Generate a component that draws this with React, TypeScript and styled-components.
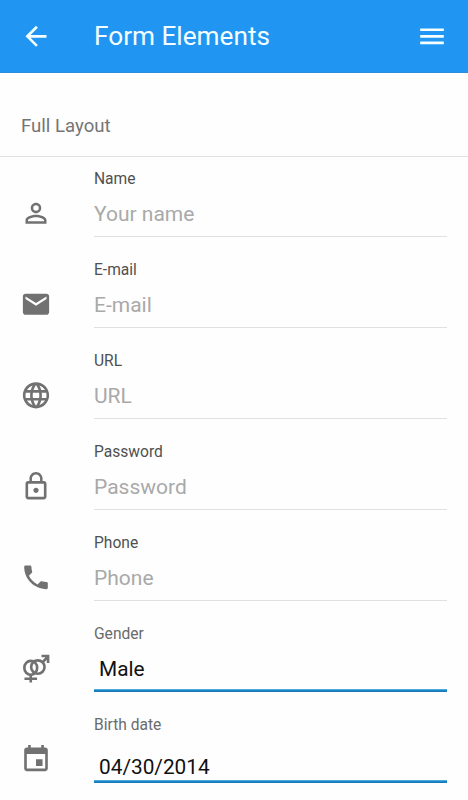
import React from 'react';
import styled, { createGlobalStyle } from 'styled-components';

const GlobalStyle = createGlobalStyle`
  * { box-sizing: border-box; }
  body {
    margin: 0;
    background: #fefefe;
    font-family: Roboto, "Liberation Sans", sans-serif;
    overflow: hidden;
  }
`;

const Screen = styled.div`
  width: 100%;
  height: 800px;
  overflow: hidden;
  background: #fefefe;
`;

const Toolbar = styled.header`
  display: flex;
  align-items: center;
  height: 73px;
  padding: 0 20px;
  background: #2096f2;
  border-bottom: 1px solid #2b8fdd;
  color: #f4feff;
`;

const Title = styled.h1`
  flex: 1;
  margin: 0 0 0 42px;
  font-size: 26.2px;
  line-height: 32px;
  font-weight: 400;
`;

const IconButton = styled.button`
  display: flex;
  padding: 0;
  border: 0;
  background: none;
  color: inherit;
`;

const Svg = styled.svg`
  display: block;
  width: 32px;
  height: 32px;
  fill: currentColor;
`;

const SectionTitle = styled.h2`
  height: 84px;
  margin: 0;
  padding: 41px 21px 0;
  border-bottom: 1px solid #e2e2e2;
  color: #757575;
  font-size: 18.6px;
  line-height: 24px;
  font-weight: 400;
`;

const Row = styled.label`
  display: grid;
  grid-template-columns: 73px 1fr;
  height: 91px;
  padding: 0 21px 0 20px;
`;

const RowIcon = styled.span`
  padding-top: 40px;
  color: #717171;
`;

const Field = styled.span`
  display: flex;
  flex-direction: column;
  padding: 11px 0 0 1px;
`;

const Caption = styled.span<{ $muted?: boolean }>`
  height: 20px;
  color: ${(p) => (p.$muted ? '#6b6b6b' : '#505050')};
  font-size: 15.6px;
  line-height: 22px;
`;

const Input = styled.input`
  width: 100%;
  height: 49px;
  padding: 3px 0 0;
  border: 0;
  border-radius: 0;
  border-bottom: 1px solid #e0e0e0;
  outline: 0;
  background: transparent;
  color: #111;
  font: 400 21px Roboto, "Liberation Sans", sans-serif;
  &::placeholder { color: #a9a9a9; opacity: 1; }
`;

const PickerInput = styled(Input)<{ $drop: number }>`
  padding: ${(p) => p.$drop}px 0 3px 5px;
  border-bottom: 0;
  background: linear-gradient(#4da8dc 0 1px, #1d86c8 1px 2px, #1a78b5 2px) bottom / 100% 3px no-repeat;
  font-size: 20.8px;
`;

function Icon({ d, children }: { d?: string; children?: React.ReactNode }) {
  return <Svg viewBox="-0.19 -0.45 24.38 24.38" aria-hidden="true">{d ? <path d={d} /> : children}</Svg>;
}

const paths = {
  back: 'M20 11H7.83l5.59-5.59L12 4l-8 8 8 8 1.41-1.41L7.83 13H20v-2z',
  menu: 'M3 18h18v-2H3v2zm0-5h18v-2H3v2zm0-7v2h18V6H3z',
  person: 'M12 5.9a2.1 2.1 0 1 1 0 4.2 2.1 2.1 0 0 1 0-4.2m0 9c2.97 0 6.1 1.46 6.1 2.1v1.1H5.9V17c0-.64 3.13-2.1 6.1-2.1M12 4C9.79 4 8 5.79 8 8s1.79 4 4 4 4-1.79 4-4-1.79-4-4-4zm0 9c-2.67 0-8 1.34-8 4v3h16v-3c0-2.66-5.33-4-8-4z',
  email: 'M20 4H4c-1.1 0-1.99.9-1.99 2L2 18c0 1.1.9 2 2 2h16c1.1 0 2-.9 2-2V6c0-1.1-.9-2-2-2zm0 4l-8 5-8-5V6l8 5 8-5v2z',
  globe: 'M11.99 2C6.47 2 2 6.48 2 12s4.47 10 9.99 10C17.52 22 22 17.52 22 12S17.52 2 11.99 2zm6.93 6h-2.95a15.65 15.65 0 0 0-1.38-3.56A8.03 8.03 0 0 1 18.92 8zM12 4.04c.83 1.2 1.48 2.53 1.91 3.96h-3.82c.43-1.43 1.08-2.76 1.91-3.96zM4.26 14C4.1 13.36 4 12.69 4 12s.1-1.36.26-2h3.38c-.08.66-.14 1.32-.14 2s.06 1.34.14 2H4.26zm.82 2h2.95c.32 1.25.78 2.45 1.38 3.56A7.987 7.987 0 0 1 5.08 16zm2.95-8H5.08a7.987 7.987 0 0 1 4.33-3.56A15.65 15.65 0 0 0 8.03 8zM12 19.96c-.83-1.2-1.48-2.53-1.91-3.96h3.82c-.43 1.43-1.08 2.76-1.91 3.96zM14.34 14H9.66c-.09-.66-.16-1.32-.16-2s.07-1.35.16-2h4.68c.09.65.16 1.32.16 2s-.07 1.34-.16 2zm.25 5.56c.6-1.11 1.06-2.31 1.38-3.56h2.95a8.03 8.03 0 0 1-4.33 3.56zM16.36 14c.08-.66.14-1.32.14-2s-.06-1.34-.14-2h3.38c.16.64.26 1.31.26 2s-.1 1.36-.26 2h-3.38z',
  lock: 'M12 17c1.1 0 2-.9 2-2s-.9-2-2-2-2 .9-2 2 .9 2 2 2zm6-9h-1V6c0-2.76-2.24-5-5-5S7 3.24 7 6v2H6c-1.1 0-2 .9-2 2v10c0 1.1.9 2 2 2h12c1.1 0 2-.9 2-2V10c0-1.1-.9-2-2-2zM8.9 6c0-1.71 1.39-3.1 3.1-3.1s3.1 1.39 3.1 3.1v2H8.9V6zM18 20H6V10h12v10z',
  phone: 'M6.62 10.79c1.44 2.83 3.76 5.14 6.59 6.59l2.2-2.2c.27-.27.67-.36 1.02-.24 1.12.37 2.33.57 3.57.57.55 0 1 .45 1 1V20c0 .55-.45 1-1 1-9.39 0-17-7.61-17-17 0-.55.45-1 1-1h3.5c.55 0 1 .45 1 1 0 1.25.2 2.45.57 3.57.11.35.03.74-.25 1.02l-2.2 2.2z',
  calendar: 'M17 12h-5v5h5v-5zM16 1v2H8V1H6v2H5c-1.11 0-1.99.9-1.99 2L3 19c0 1.1.89 2 2 2h14c1.1 0 2-.9 2-2V5c0-1.1-.9-2-2-2h-1V1h-2zm3 18H5V8h14v11z',
};

function GenderIcon() {
  return (
    <Icon>
      <g fill="none" stroke="currentColor" strokeWidth="2">
        <ellipse cx="8" cy="11.6" rx="4.9" ry="5.3" />
        <ellipse cx="13.4" cy="11" rx="5.1" ry="5.1" />
        <path d="M8 16.9V22.8M3.2 19.9h9.6M16.9 7.4L21 3.2M16.2 2.6h5v5.4" />
      </g>
    </Icon>
  );
}

const textFields = [
  { label: 'Name', placeholder: 'Your name', icon: paths.person, type: 'text' },
  { label: 'E-mail', placeholder: 'E-mail', icon: paths.email, type: 'email' },
  { label: 'URL', placeholder: 'URL', icon: paths.globe, type: 'url' },
  { label: 'Password', placeholder: 'Password', icon: paths.lock, type: 'password' },
  { label: 'Phone', placeholder: 'Phone', icon: paths.phone, type: 'tel' },
];

export default function App() {
  return (
    <Screen>
      <GlobalStyle />
      <Toolbar>
        <IconButton aria-label="Back"><Icon d={paths.back} /></IconButton>
        <Title>Form Elements</Title>
        <IconButton aria-label="Menu"><Icon d={paths.menu} /></IconButton>
      </Toolbar>
      <SectionTitle>Full Layout</SectionTitle>
      <form>
        {textFields.map((f) => (
          <Row key={f.label}>
            <RowIcon><Icon d={f.icon} /></RowIcon>
            <Field>
              <Caption>{f.label}</Caption>
              <Input type={f.type} placeholder={f.placeholder} />
            </Field>
          </Row>
        ))}
        <Row>
          <RowIcon><GenderIcon /></RowIcon>
          <Field>
            <Caption $muted>Gender</Caption>
            <PickerInput $drop={5} defaultValue="Male" />
          </Field>
        </Row>
        <Row>
          <RowIcon><Icon d={paths.calendar} /></RowIcon>
          <Field>
            <Caption $muted>Birth date</Caption>
            <PickerInput $drop={20} defaultValue="04/30/2014" />
          </Field>
        </Row>
      </form>
    </Screen>
  );
}
